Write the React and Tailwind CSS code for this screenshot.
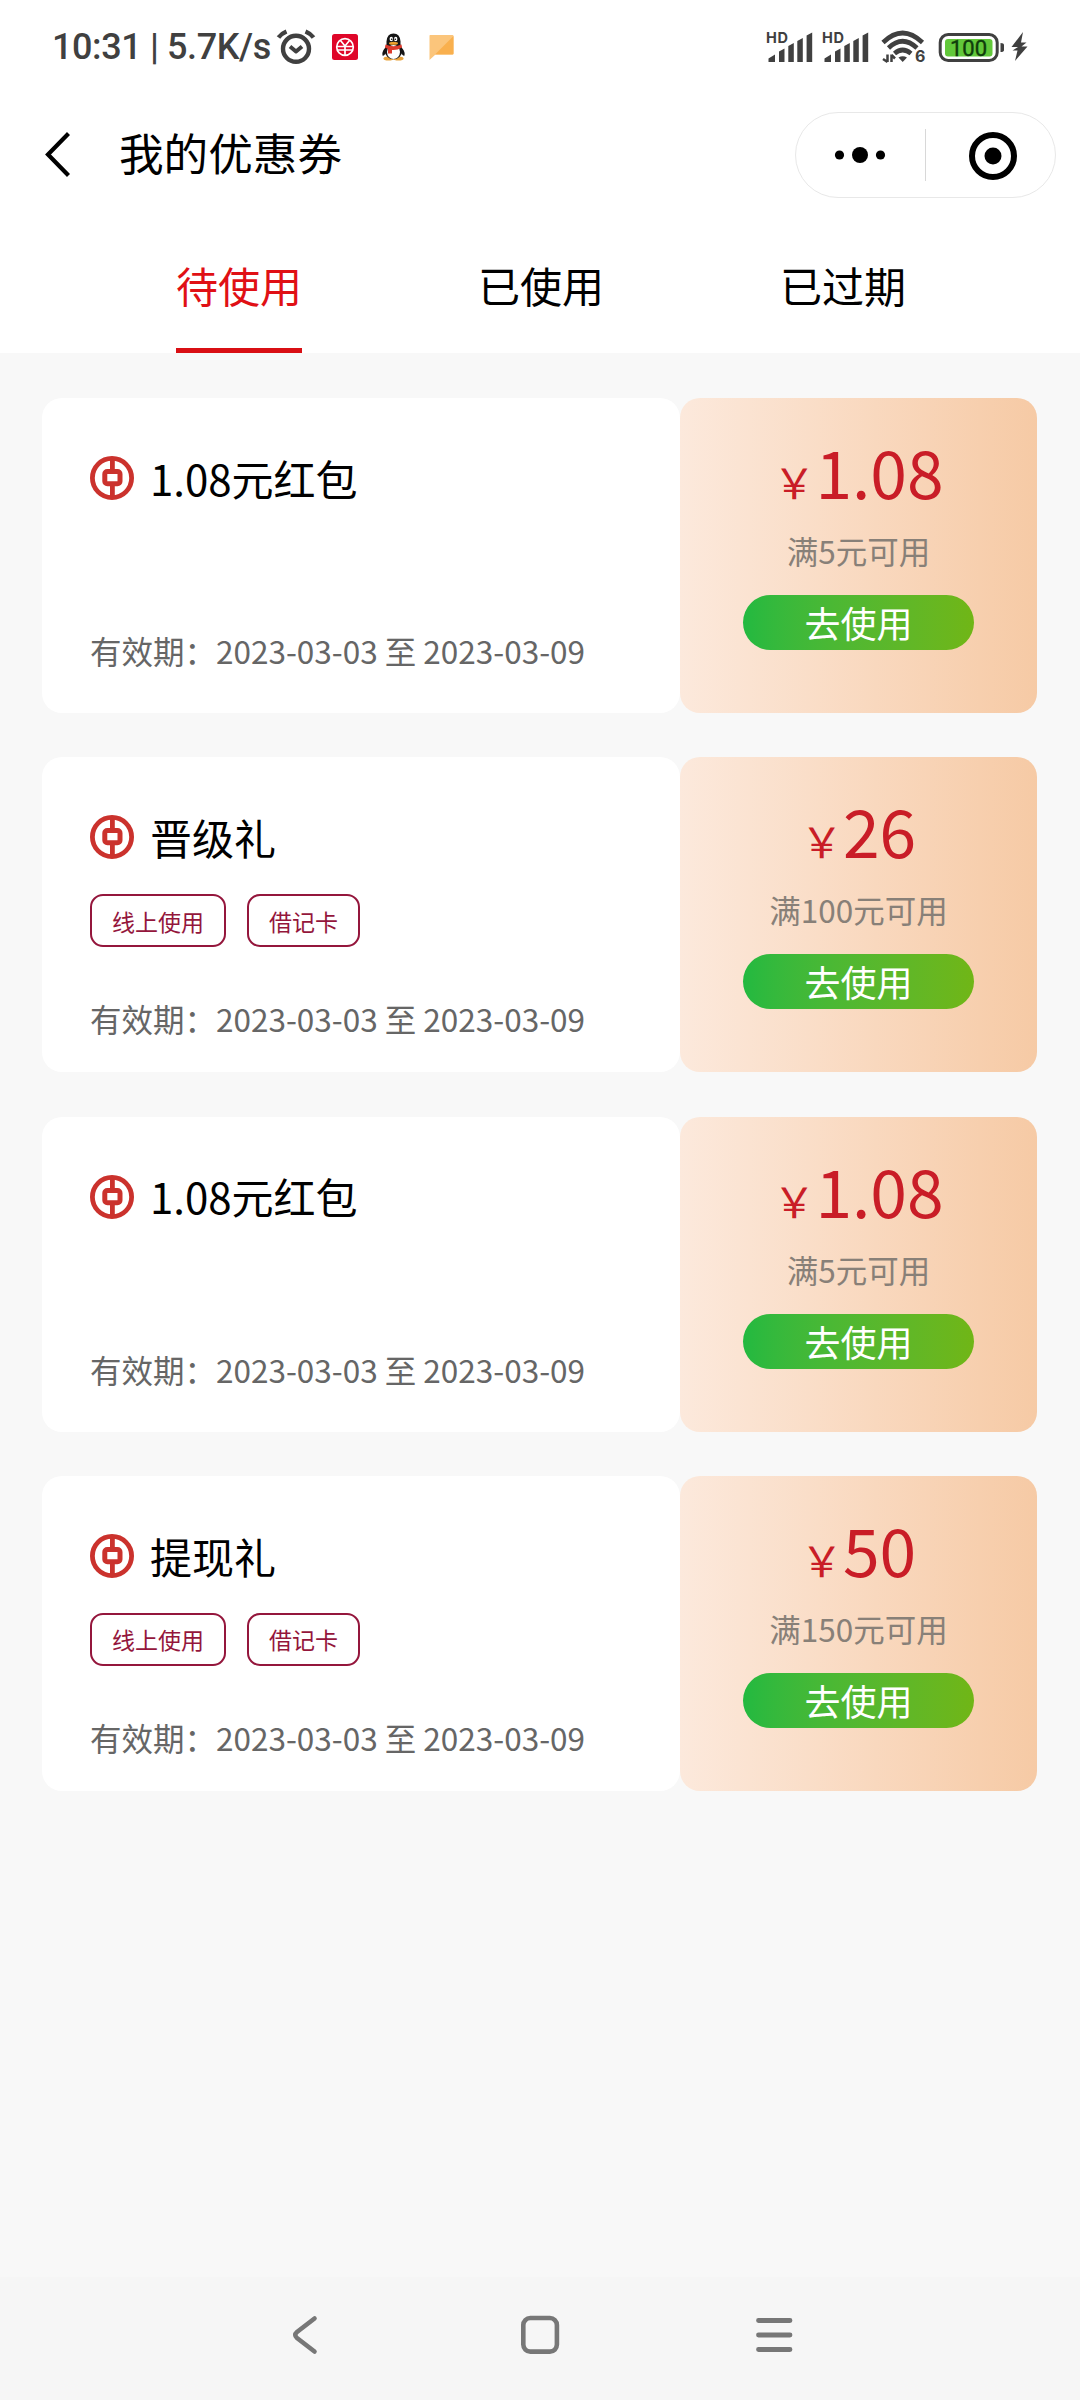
const coupons = [
  { id: 1, title: '1.08元红包', tags: [], amount: '1.08', rule: '满5元可用' },
  { id: 2, title: '晋级礼', tags: ['线上使用', '借记卡'], amount: '26', rule: '满100元可用' },
  { id: 3, title: '1.08元红包', tags: [], amount: '1.08', rule: '满5元可用' },
  { id: 4, title: '提现礼', tags: ['线上使用', '借记卡'], amount: '50', rule: '满150元可用' },
];

const tabs = ['待使用', '已使用', '已过期'];

function Signal() {
  return (
    <svg width="48" height="42" viewBox="0 -6 48 42" fill="#404040">
      <text x="0" y="11" fontSize="14.5" fontWeight="700" fontFamily="Inter, sans-serif" textLength="22">
        HD
      </text>
      <path d="M2.5 30V26.5L9 22.5V30ZM13 30V19.5L18.5 16.5V30ZM22.3 30V14L27.8 11V30ZM31.3 30V9L36.8 6V30ZM40.6 30V3.5L46.2 .5V30Z" />
    </svg>
  );
}

function StatusBar() {
  return (
    <div className="flex h-[94px] items-center justify-between px-[52px] font-[Roboto,sans-serif] text-[#404040]">
      <div className="flex items-center">
        <span className="w-[223px] text-[36px] font-medium tracking-[-0.4px] whitespace-nowrap">10:31 | 5.7K/s</span>
        {/* alarm */}
        <svg width="42" height="38" viewBox="275 27 42 38" fill="none" stroke="#404040" strokeWidth="4.4">
          <circle cx="296" cy="47.8" r="13" />
          <path d="M278.5 36.5Q281.5 32.5 286.5 30.5M313.5 36.5Q310.5 32.5 305.5 30.5" />
          <path d="M290 45.5L296 50.5L302 45.5" strokeWidth="4" strokeLinejoin="round" />
        </svg>
        {/* bank app */}
        <svg className="ml-[15px]" width="26" height="26" viewBox="0 0 26 26">
          <rect width="26" height="26" rx="2.5" fill="#df0629" />
          <g fill="none" stroke="#fff" strokeWidth="1.7">
            <circle cx="13" cy="13" r="8.3" />
            <path d="M8.5 6.5L13 12L17.5 6.5M13 12V21M5 12.5H21M6 16H20" />
          </g>
        </svg>
        {/* penguin */}
        <svg className="ml-6" width="23" height="28" viewBox="0 0 23 28">
          <ellipse cx="6.5" cy="25.5" rx="5" ry="2" fill="#e8a33d" />
          <ellipse cx="16.5" cy="25.5" rx="5" ry="2" fill="#e8a33d" />
          <path d="M4 14Q-1 19 .8 23Q2 23 4 20ZM19 14Q24 19 22.2 23Q21 23 19 20Z" fill="#151515" />
          <ellipse cx="11.5" cy="17.5" rx="8.7" ry="8.8" fill="#151515" />
          <ellipse cx="11.5" cy="19" rx="6.5" ry="7" fill="#fff" />
          <path d="M4.5 12V8.5Q5 .5 11.5 .5Q18 .5 18.5 8.5V12Z" fill="#151515" />
          <path d="M3.5 11.5Q11.5 15 19.5 11.5L20 14.5Q15 17.5 10 17V20.5H6V16L3 14.5Z" fill="#dd3a2c" />
          <ellipse cx="9.3" cy="6" rx="1.7" ry="2.3" fill="#fff" />
          <ellipse cx="13.7" cy="6" rx="1.7" ry="2.3" fill="#fff" />
          <circle cx="9.7" cy="6.3" r=".8" />
          <circle cx="13.3" cy="6.3" r=".8" />
          <ellipse cx="11.5" cy="10.3" rx="4.5" ry="1.5" fill="#eda12c" />
        </svg>
        {/* message */}
        <svg className="ml-6" width="25" height="27" viewBox="0 0 25 27">
          <path d="M1 1H23.5Q24.5 1 24.5 2V19.5Q24.5 20.5 23.5 20.5H6.5L.5 26V2Q.5 1 1 1Z" fill="#fbc57b" />
          <path d="M24.5 2V19.5Q24.5 20.5 23.5 20.5H6Z" fill="#f9b04e" />
        </svg>
      </div>

      <div className="flex items-center">
        <Signal />
        <span className="w-2" />
        <Signal />
        {/* wifi 6 */}
        <svg className="ml-2.5" width="46" height="42" viewBox="880 26 46 42" fill="none" stroke="#404040" strokeWidth="4.6">
          <path d="M883 42.5Q902.5 23.5 922.5 42.5" />
          <path d="M888.5 48Q902.5 34.5 917 48" />
          <path d="M894.5 53.5Q902.5 46.5 911 53.5" />
          <path d="M898.5 57.5Q902.7 55 907 57.5L902.7 62Z" fill="#404040" stroke="none" />
          <path d="M887.5 54.5V62M883 59L887.5 62M891.5 62V54.5M891.5 55L895 58.5" strokeWidth="2.5" />
          <text x="915" y="62" fontSize="16" fontWeight="700" fontFamily="Inter, sans-serif" fill="#404040" stroke="none">
            6
          </text>
        </svg>
        {/* battery */}
        <svg className="ml-3" width="67" height="34" viewBox="938 29 67 34">
          <rect x="940.2" y="33.5" width="57" height="26" rx="8" fill="#fff" stroke="#404040" strokeWidth="3" />
          <rect x="945" y="38" width="47.5" height="17.5" rx="3" fill="#62c83a" />
          <text x="968.5" y="54.7" textAnchor="middle" fontSize="22" fill="#0f3d0b" stroke="#0f3d0b" strokeWidth=".4">
            100
          </text>
          <path d="M1000.5 42Q1004 42 1004 44V49Q1004 51 1000.5 51Z" fill="#404040" />
        </svg>
        <svg className="ml-1.5" width="17" height="30" viewBox="0 0 17 30" fill="#404040">
          <path d="M12 0L.5 15H7L1.5 18.5H6.5L4 29L16.5 14.5H10.5L15.5 10.5H10Z" />
        </svg>
      </div>
    </div>
  );
}

function Header() {
  return (
    <div className="flex h-[122px] items-center pr-6 pl-[42px]">
      <svg width="32" height="50" viewBox="42.5 130 32 50" fill="none" stroke="#000" strokeWidth="4.2">
        <path d="M69 133.5L48.5 154.5L69 175.5" />
      </svg>
      <h1 className="ml-[45px] pb-[7px] text-[44.6px] leading-[60px]">我的优惠券</h1>
      <div className="ml-auto flex h-[86px] w-[261px] items-center rounded-full border border-[#e8e8e8]">
        <svg width="129" height="84" viewBox="0 0 129 84">
          <circle cx="43.5" cy="42" r="4.6" />
          <circle cx="64" cy="42" r="8" />
          <circle cx="84.5" cy="42" r="4.6" />
        </svg>
        <span className="h-[52px] w-px bg-[#d8d8d8]" />
        <svg width="129" height="84" viewBox="0 0 129 84">
          <circle cx="67" cy="43" r="21" fill="none" stroke="#000" strokeWidth="6" />
          <circle cx="67" cy="43" r="8.5" />
        </svg>
      </div>
    </div>
  );
}

function BankLogo() {
  return (
    <svg width="44" height="44" viewBox="0 0 44 44" fill="none" stroke="#cb322d">
      <circle cx="22" cy="22" r="19.6" strokeWidth="4.8" />
      <rect x="14.8" y="15.6" width="15.2" height="12.2" rx="2.5" strokeWidth="5" />
      <path d="M22.4 2V14M22.4 29V42" strokeWidth="4.8" />
    </svg>
  );
}

function CouponCard({ coupon }) {
  const hasTags = coupon.tags.length > 0;
  return (
    <div className="flex h-[315px]">
      <div className="flex w-[638px] flex-col rounded-[20px] bg-white pt-[50px] pl-12">
        <div className="flex h-[60px] items-center gap-4">
          <BankLogo />
          <span className="pb-px text-[42px] leading-[60px]">{coupon.title}</span>
        </div>
        {hasTags && (
          <div className="mt-[27px] flex gap-[21px]">
            {coupon.tags.map((tag) => (
              <span
                key={tag}
                className="flex h-[53px] items-center rounded-[13px] border-2 border-[#94163c] px-[20px] text-[23px] text-[#94163c]"
              >
                {tag}
              </span>
            ))}
          </div>
        )}
        <p className={`text-[31.5px] leading-[46px] text-[#666] ${hasTags ? 'mt-12' : 'mt-[119px]'}`}>
          有效期：2023-03-03 至 2023-03-09
        </p>
      </div>

      <div className="flex w-[357px] flex-col items-center rounded-[20px] bg-gradient-to-r from-[#fce9dc] to-[#f6caa5] pt-[26px]">
        <div className="flex items-baseline leading-[92px] text-[#c91d27]">
          <span className="text-[42px]">￥</span>
          <span className="text-[66px]">{coupon.amount}</span>
        </div>
        <p className="text-[31.5px] leading-[46px] text-[#888078]">{coupon.rule}</p>
        <button className="mt-[22px] h-[55px] w-[231px] rounded-full bg-gradient-to-r from-[#22b940] to-[#70b616] text-[36px] leading-[55px] text-white">
          去使用
        </button>
      </div>
    </div>
  );
}

function NavBar() {
  return (
    <div className="flex h-[123px] items-center justify-between bg-[#f6f6f6] px-[284px] pb-[5px]">
      <svg width="40" height="50" viewBox="284 2311 40 50" fill="none" stroke="#777" strokeWidth="4.6" strokeLinecap="round">
        <path d="M314.5 2318.5L297 2332Q293.5 2335 297 2338L314.5 2351.5" />
      </svg>
      <svg width="40" height="50" viewBox="520 2311 40 50" fill="none" stroke="#777" strokeWidth="4.6">
        <rect x="523.3" y="2318" width="33.6" height="33.6" rx="7" />
      </svg>
      <svg width="40" height="50" viewBox="756 2311 40 50" fill="none" stroke="#777" strokeWidth="4.8" strokeLinecap="round">
        <path d="M758.5 2320.5H790M758.5 2335H790M758.5 2349.5H790" />
      </svg>
    </div>
  );
}

export default function App() {
  return (
    <div className="flex h-[2400px] w-[1080px] flex-col overflow-hidden bg-[#f8f8f8] font-['Noto_Sans_CJK_SC',sans-serif] text-black">
      <div className="bg-white">
        <StatusBar />
        <Header />
        <div className="flex h-[137px] pl-[88px]">
          {tabs.map((tab, i) => (
            <div key={tab} className="flex w-[302px] justify-center">
              <span
                className={`h-[137px] border-b-[5px] pt-[39px] text-[42px] leading-[60px] ${
                  i === 0 ? 'border-[#d90f14] text-[#e01015]' : 'border-transparent'
                }`}
              >
                {tab}
              </span>
            </div>
          ))}
        </div>
      </div>

      <div className="flex flex-1 flex-col gap-[44.4px] px-[42px] pt-[45px]">
        {coupons.map((c) => (
          <CouponCard key={c.id} coupon={c} />
        ))}
      </div>

      <NavBar />
    </div>
  );
}
